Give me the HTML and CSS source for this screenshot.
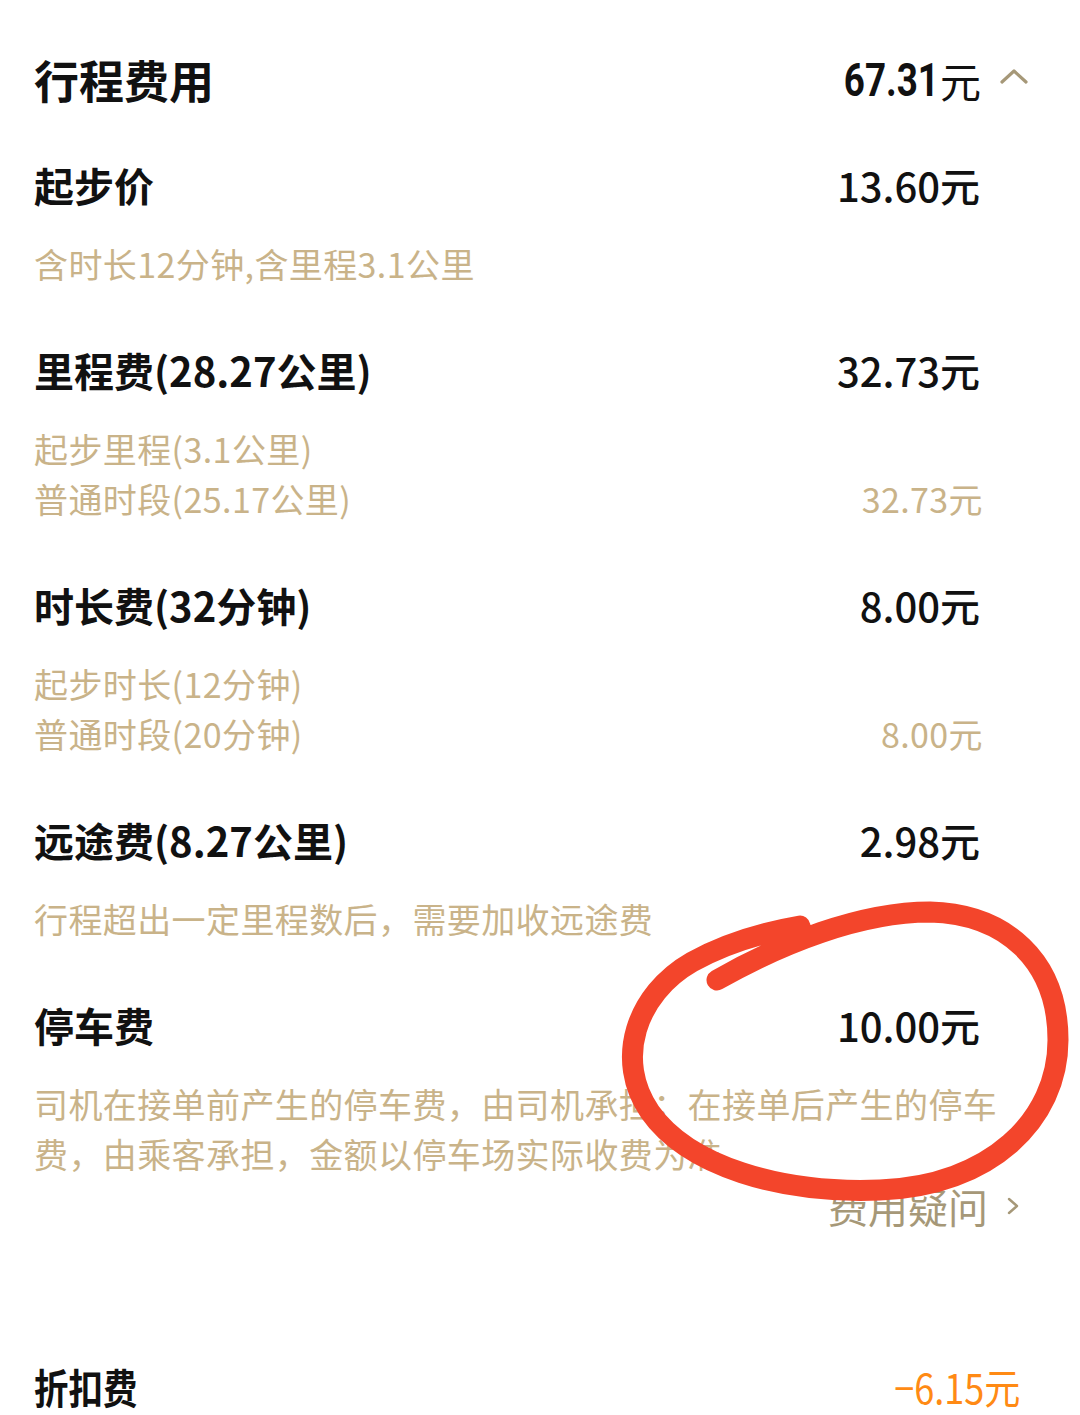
FILE: index.html
```html
<!DOCTYPE html>
<html lang="zh-CN">
<head>
  <meta charset="UTF-8" />
  <meta name="viewport" content="width=device-width, initial-scale=1.0"/>
  <title>行程费用</title>
  <link rel="stylesheet" href="styles.css">
</head>
<body>

  <main class="fare">
    <!-- total -->
    <header class="fare-head">
      <h1>行程费用</h1>
      <div class="total">
        <span class="total-num">67.31</span><span class="total-unit">元</span>
        <svg class="chev-up" width="28" height="18" viewBox="0 0 28 18">
          <polyline points="2,15 14,4 26,15" />
        </svg>
      </div>
    </header>

    <section class="item">
      <div class="item-row">
        <span class="item-name">起步价</span>
        <span class="item-price">13.60元</span>
      </div>
      <p class="item-note">含时长12分钟,含里程3.1公里</p>
    </section>

    <section class="item">
      <div class="item-row">
        <span class="item-name">里程费(28.27公里)</span>
        <span class="item-price">32.73元</span>
      </div>
      <div class="sub-row"><span>起步里程(3.1公里)</span></div>
      <div class="sub-row"><span>普通时段(25.17公里)</span><span>32.73元</span></div>
    </section>

    <section class="item">
      <div class="item-row">
        <span class="item-name">时长费(32分钟)</span>
        <span class="item-price">8.00元</span>
      </div>
      <div class="sub-row"><span>起步时长(12分钟)</span></div>
      <div class="sub-row"><span>普通时段(20分钟)</span><span>8.00元</span></div>
    </section>

    <section class="item">
      <div class="item-row">
        <span class="item-name">远途费(8.27公里)</span>
        <span class="item-price">2.98元</span>
      </div>
      <p class="item-note">行程超出一定里程数后，需要加收远途费</p>
    </section>

    <section class="item item-last">
      <div class="item-row">
        <span class="item-name">停车费</span>
        <span class="item-price">10.00元</span>
      </div>
      <p class="item-note">司机在接单前产生的停车费，由司机承担；在接单后产生的停车费，由乘客承担，金额以停车场实际收费为准。</p>
    </section>

    <a class="question" href="#">费用疑问
      <svg width="14" height="20" viewBox="0 0 14 20"><polyline points="3,3 11,10 3,17" /></svg>
    </a>

    <div class="discount">
      <span class="discount-name">折扣费</span>
      <span class="discount-price">−6.15元</span>
    </div>
  </main>

  <!-- hand-drawn mark over the parking fee -->
  <svg class="ring" width="1080" height="1415" viewBox="0 0 1080 1415">
    <path d="M717,980 C780,944 860,912 930,912 C1005,914 1058,960 1058,1040 C1058,1120 990,1186 880,1190 C780,1194 688,1166 650,1112 C614,1060 636,994 692,962 C728,942 765,932 800,926" />
  </svg>

</body>
</html>
```

FILE: styles.css
```css
:root {
  --text: #111;
  --gold: #c9b389;
  --muted: #a69878;
  --orange: #ff8a14;
  --ring: #f3452b;
}
* { box-sizing: border-box; margin: 0; padding: 0; }
body {
  font-family: "Noto Sans CJK SC", "Noto Sans", sans-serif;
  background: #fff;
  color: var(--text);
  position: relative;
  width: 1080px;
  height: 1415px;
  overflow: hidden;
}
.fare {
  padding: 50px 0 0 34px;
}
/* header */
.fare-head {
  display: flex;
  justify-content: space-between;
  align-items: center;
  height: 60px;
  margin-right: 52px;
  margin-bottom: 47px;
}
.fare-head h1 {
  font-size: 45px;
  font-weight: 700;
  line-height: 60px;
}
.total {
  display: flex;
  align-items: center;
}
.total-num {
  display: inline-block;
  font-family: "Roboto", sans-serif;
  font-weight: 700;
  font-size: 46px;
  transform: scaleX(.8);
  transform-origin: right center;
}
.total-unit {
  font-size: 41px;
  margin-left: 1px;
}
.chev-up {
  margin-left: 19px;
  margin-top: -8px;
}
.chev-up polyline {
  fill: none;
  stroke: var(--muted);
  stroke-width: 3.2;
  stroke-linecap: round;
  stroke-linejoin: round;
}
/* fee items */
.item {
  margin-bottom: 53px;
}
.item-last {
  margin-bottom: 2px;
}
.item-row {
  display: flex;
  justify-content: space-between;
  align-items: center;
  height: 56px;
  margin-right: 100px;
  margin-bottom: 26px;
}
.item-name {
  font-size: 40px;
  font-weight: 700;
}
.item-price {
  font-size: 40px;
  font-weight: 500;
}
.item-note,
.sub-row {
  color: var(--gold);
  font-size: 34px;
  line-height: 50px;
  letter-spacing: .4px;
}
.item-note {
  margin-right: 56px;
}
.sub-row {
  display: flex;
  justify-content: space-between;
  margin-right: 97px;
}
/* bottom links */
.question {
  display: flex;
  justify-content: flex-end;
  align-items: center;
  gap: 18px;
  height: 50px;
  margin-right: 60px;
  font-size: 40px;
  color: var(--muted);
  text-decoration: none;
}
.question polyline {
  fill: none;
  stroke: var(--muted);
  stroke-width: 2.4;
  stroke-linecap: round;
  stroke-linejoin: round;
}
.discount {
  display: flex;
  justify-content: space-between;
  align-items: center;
  height: 56px;
  margin-top: 127px;
  margin-right: 60px;
}
.discount-name {
  display: inline-block;
  font-size: 41px;
  font-weight: 700;
  transform: scaleX(.84);
  transform-origin: left center;
}
.discount-price {
  display: inline-block;
  font-size: 41px;
  color: var(--orange);
  transform: scaleX(.88);
  transform-origin: right center;
}
/* red annotation ring */
.ring {
  position: absolute;
  left: 0;
  top: 0;
  pointer-events: none;
}
.ring path {
  fill: none;
  stroke: var(--ring);
  stroke-width: 21;
  stroke-linecap: round;
  stroke-linejoin: round;
}
```
